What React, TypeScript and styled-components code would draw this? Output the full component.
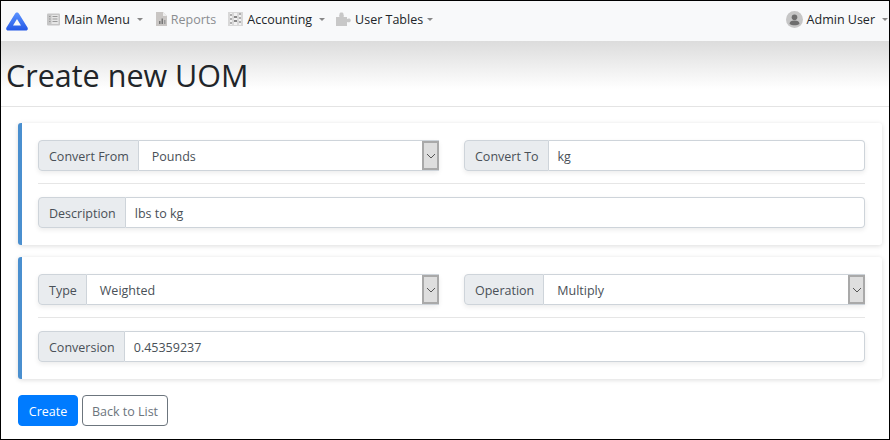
import React from 'react';
import styled, { createGlobalStyle } from 'styled-components';

const GlobalStyle = createGlobalStyle`
  html, body {
    margin: 0;
    padding: 0;
    background: #fff;
  }
  * {
    box-sizing: border-box;
  }
`;

const Logo = () => (
  <svg width="22" height="19" viewBox="0 0 22 19">
    <defs>
      <linearGradient id="logoFill" x1="0" y1="0" x2="0" y2="1">
        <stop offset="0" stopColor="#5b93ff" />
        <stop offset="1" stopColor="#2458e6" />
      </linearGradient>
    </defs>
    <path
      fillRule="evenodd"
      d="M11 0.500 C11.800 0.500 12.500 1 13 1.800 L21.500 15.500 C22.300 17 21.500 18.500 19.800 18.500 H2.200 C0.500 18.500 -0.300 17 0.500 15.500 L9 1.800 C9.500 1 10.200 0.500 11 0.500 Z M11 7 L7 13.500 H15 Z"
      fill="url(#logoFill)"
    />
  </svg>
);

const MenuIcon = () => (
  <svg width="13" height="13" viewBox="0 0 13 13">
    <rect width="13" height="12" y="0.5" rx="1" fill="#c6c6c6" />
    <rect x="4.5" y="2" width="7" height="9" fill="#e6e6e6" />
    <path d="M2 3.500h1.500M2 6h1.500M2 8.500h1.500M5.500 3.500h5M5.500 6h5M5.500 8.500h5" stroke="#999" strokeWidth="1" />
  </svg>
);

const ReportIcon = () => (
  <svg width="11" height="14" viewBox="0 0 11 14">
    <path d="M0 0h7l4 4v10H0z" fill="#c9c6c4" />
    <path d="M7 0l4 4H7z" fill="#eee" />
    <rect x="3" y="9" width="1.500" height="3" fill="#777" />
    <rect x="5.500" y="6.500" width="1.500" height="5.500" fill="#777" />
    <rect x="8" y="8" width="1.500" height="4" fill="#999" />
  </svg>
);

const AccountingIcon = () => (
  <svg width="15" height="14" viewBox="0 0 15 14">
    <rect width="15" height="14" fill="#d8d8d8" />
    <rect x="2" y="1" width="2" height="12" fill="#f2f2f2" />
    <rect x="6" y="1" width="3" height="12" fill="#f2f2f2" />
    <rect x="11" y="1" width="2" height="12" fill="#f2f2f2" />
    <path d="M2 3h2M2 7h2M2 11h2M11 2h2M11 6h2M11 10h2" stroke="#999" strokeWidth="1.400" />
    <path d="M6 5h3M6 9h3" stroke="#666" strokeWidth="1.400" />
  </svg>
);

const PuzzleIcon = () => (
  <svg width="15" height="14" viewBox="0 0 15 14">
    <path
      d="M0 5h3.500C3 4 3 3.500 3.500 2.500 C3.500 1 4 0.500 5.500 0.500 C7 0.500 7.500 1 7.500 2.500 C8 3.500 8 4 7.500 5H11V7C12 6.500 13 6.300 14 6.800 C15 7.500 15 9.500 14 10 C13 10.500 12 10.300 11 10V14H0z"
      fill="#c8c8c8"
    />
  </svg>
);

const UserIcon = () => (
  <svg width="17" height="17" viewBox="0 0 17 17">
    <circle cx="8.500" cy="8.500" r="8.500" fill="#c6c6c6" />
    <circle cx="8.500" cy="6.200" r="2.800" fill="#6e6e6e" />
    <path d="M3.500 13c0-2.500 2-3.500 5-3.500s5 1 5 3.500c-1.300 1-3 1.300-5 1.300s-3.700-.3-5-1.300z" fill="#6e6e6e" />
  </svg>
);

const Chevron = () => (
  <svg width="10" height="6" viewBox="0 0 10 6">
    <path d="M1 1l4 4 4-4" fill="none" stroke="#555" strokeWidth="1" />
  </svg>
);

const App: React.FC = () => {
  return (
    <Frame>
      <GlobalStyle />
      <Navbar>
        <LogoLink>
          <Logo />
        </LogoLink>
        <NavItem space={13}>
          <MenuIcon />
          <span>Main Menu</span>
          <Caret />
        </NavItem>
        <NavItem muted>
          <ReportIcon />
          <span>Reports</span>
        </NavItem>
        <NavItem space={11}>
          <AccountingIcon />
          <span>Accounting</span>
          <Caret />
        </NavItem>
        <NavItem>
          <PuzzleIcon />
          <span>User Tables</span>
          <Caret tight />
        </NavItem>
        <UserItem>
          <UserIcon />
          <span>Admin User</span>
          <Caret />
        </UserItem>
      </Navbar>
      <Header>
        <Title>Create new UOM</Title>
      </Header>
      <Content>
        <Card>
          <Row>
            <Group>
              <Addon>Convert From</Addon>
              <SelectBox>
                <SelectValue>Pounds</SelectValue>
                <SelectArrow>
                  <Chevron />
                </SelectArrow>
              </SelectBox>
            </Group>
            <Group>
              <Addon>Convert To</Addon>
              <Field>kg</Field>
            </Group>
          </Row>
          <Divider />
          <Group>
            <Addon>Description</Addon>
            <Field>lbs to kg</Field>
          </Group>
        </Card>
        <Card>
          <Row>
            <Group>
              <Addon>Type</Addon>
              <SelectBox>
                <SelectValue>Weighted</SelectValue>
                <SelectArrow>
                  <Chevron />
                </SelectArrow>
              </SelectBox>
            </Group>
            <Group>
              <Addon>Operation</Addon>
              <SelectBox>
                <SelectValue>Multiply</SelectValue>
                <SelectArrow>
                  <Chevron />
                </SelectArrow>
              </SelectBox>
            </Group>
          </Row>
          <Divider />
          <Group>
            <Addon>Conversion</Addon>
            <Field>0.45359237</Field>
          </Group>
        </Card>
        <Actions>
          <PrimaryButton>Create</PrimaryButton>
          <OutlineButton>Back to List</OutlineButton>
        </Actions>
      </Content>
    </Frame>
  );
};

const Frame = styled.div`
  width: 890px;
  height: 440px;
  overflow: hidden;
  border: 1px solid #000;
  font-family: 'Open Sans', 'Noto Sans', sans-serif;
  font-size: 12.5px;
  color: #212529;
`;

const Navbar = styled.nav`
  height: 40px;
  background: #f8f9fa;
  display: flex;
  align-items: center;
  padding: 0 0 4px 5px;
`;

const LogoLink = styled.div`
  display: flex;
  width: 41px;
  padding-top: 5px;
`;

const NavItem = styled.div<{ muted?: boolean; space?: number }>`
  display: flex;
  align-items: center;
  gap: 4px;
  margin-right: ${(p) => p.space ?? 12}px;
  color: ${(p) => (p.muted ? '#8a8d90' : '#212529')};
`;

const UserItem = styled(NavItem)`
  margin-left: auto;
  margin-right: 1px;
`;

const Caret = styled.i<{ tight?: boolean }>`
  width: 0;
  height: 0;
  margin-left: ${(p) => (p.tight ? '0' : '3px')};
  border-top: 3.500px solid #888;
  border-left: 3.500px solid transparent;
  border-right: 3.500px solid transparent;
`;

const Header = styled.header`
  height: 66px;
  padding: 14px 5px 0;
  background: linear-gradient(to bottom, #dcdcdc 0, #fff 48px);
  border-bottom: 1px solid #e4e4e4;
`;

const Title = styled.h1`
  margin: 0;
  font-size: 30.5px;
  font-weight: 400;
  line-height: 40px;
  color: #212529;
`;

const Content = styled.main`
  padding: 16px 7px 0 17px;
  display: flex;
  flex-direction: column;
  gap: 12px;
`;

const Card = styled.section`
  height: 122px;
  padding: 17px 17px 16px 16px;
  background: #fff;
  border-left: 4px solid #4a8fcf;
  border-radius: 3px;
  box-shadow: 0 1px 5px rgba(0, 0, 0, 0.14);
`;

const Row = styled.div`
  display: grid;
  grid-template-columns: 1fr 1fr;
  gap: 25px;
`;

const Divider = styled.hr`
  margin: 12px 0 13px;
  border: 0;
  border-top: 1px solid #e6e6e6;
`;

const Group = styled.div`
  display: flex;
  height: 31px;
  border-radius: 4px;
  box-shadow: 0 2px 5px rgba(0, 0, 0, 0.08);
`;

const Addon = styled.label`
  display: flex;
  align-items: center;
  padding: 1px 9px 0 10px;
  background: #e9ecef;
  border: 1px solid #ced4da;
  border-radius: 4px 0 0 4px;
  color: #495057;
  white-space: nowrap;
`;

const Field = styled.div`
  flex: 1;
  display: flex;
  align-items: center;
  padding: 1px 9px 0;
  background: #fff;
  border: 1px solid #ced4da;
  border-left: 0;
  border-radius: 0 4px 4px 0;
  color: #495057;
`;

const SelectBox = styled.div`
  flex: 1;
  display: flex;
  background: #fff;
  border-top: 1px solid #ced4da;
  border-bottom: 1px solid #ced4da;
`;

const SelectValue = styled.div`
  flex: 1;
  display: flex;
  align-items: center;
  padding: 1px 13px 0;
  color: #495057;
`;

const SelectArrow = styled.div`
  width: 17px;
  display: flex;
  align-items: center;
  justify-content: center;
  background: #dedede;
  border: 2px solid #a9a9a9;
`;

const Actions = styled.div`
  display: flex;
  gap: 4px;
  margin-top: 4px;
`;

const PrimaryButton = styled.button`
  height: 31px;
  width: 60px;
  padding: 1px 0 0;
  font: inherit;
  color: #fff;
  background: #007bff;
  border: 1px solid #007bff;
  border-radius: 4px;
`;

const OutlineButton = styled.button`
  height: 31px;
  width: 86px;
  padding: 1px 0 0;
  font: inherit;
  color: #6c757d;
  background: #fff;
  border: 1px solid #6c757d;
  border-radius: 4px;
`;

export default App;
